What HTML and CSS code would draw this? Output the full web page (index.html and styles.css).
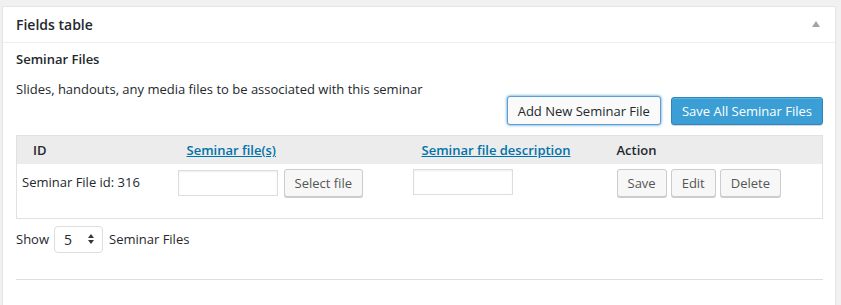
FILE: index.html
```html
<!DOCTYPE html>
<html lang="en">
<head>
    <meta charset="UTF-8">
    <meta name="viewport" content="width=device-width, initial-scale=1.0">
    <title>Fields table</title>
    <link rel="stylesheet" href="styles.css">
</head>
<body>
    <div class="postbox">
        <div class="postbox-header">
            <h2>Fields table</h2>
            <svg class="toggle" width="10" height="8" viewBox="0 0 10 8"><polygon points="5,1 9,7 1,7" fill="#a0a5aa"/></svg>
        </div>
        <div class="inside">
            <h3>Seminar Files</h3>
            <p class="description">Slides, handouts, any media files to be associated with this seminar</p>
            <div class="top-actions">
                <button class="button focused">Add New Seminar File</button>
                <button class="button button-primary">Save All Seminar Files</button>
            </div>

            <table class="fields">
                <colgroup>
                    <col class="col-id">
                    <col class="col-file">
                    <col class="col-desc">
                    <col class="col-action">
                </colgroup>
                <thead>
                    <tr>
                        <th class="th-id">ID</th>
                        <th><a href="#">Seminar file(s)</a></th>
                        <th><a href="#">Seminar file description</a></th>
                        <th class="th-action">Action</th>
                    </tr>
                </thead>
                <tbody>
                    <tr>
                        <td class="td-id">Seminar File id: 316</td>
                        <td>
                            <div class="cell-row">
                                <input type="text" class="field">
                                <button class="button">Select file</button>
                            </div>
                        </td>
                        <td>
                            <div class="cell-row">
                                <input type="text" class="field">
                            </div>
                        </td>
                        <td>
                            <div class="cell-row tight">
                                <button class="button">Save</button>
                                <button class="button">Edit</button>
                                <button class="button">Delete</button>
                            </div>
                        </td>
                    </tr>
                </tbody>
            </table>

            <div class="per-page">
                <span>Show</span>
                <div class="select-box">
                    <span>5</span>
                    <svg width="8" height="12" viewBox="0 0 8 12"><polygon points="4,1 7,5 1,5" fill="#32373c"/><polygon points="4,11 7,7 1,7" fill="#32373c"/></svg>
                </div>
                <span>Seminar Files</span>
            </div>

            <hr class="divider">
        </div>
    </div>
</body>
</html>
```

FILE: styles.css
```css
body {
    margin: 0;
    background-color: #f1f1f1;
    font-family: "Open Sans", Arial, sans-serif;
    font-size: 13px;
    color: #23282d;
}
.postbox {
    margin: 6px 5px 0 2px;
    height: 320px;
    background-color: #fff;
    border: 1px solid #e5e5e5;
    box-shadow: 0 1px 1px rgba(0, 0, 0, 0.04);
}
.postbox-header {
    display: flex;
    align-items: center;
    justify-content: space-between;
    height: 35px;
    padding: 0 14px 0 13px;
    border-bottom: 1px solid #eee;
}
.postbox-header h2 {
    margin: 0;
    font-size: 14px;
    font-weight: 600;
    line-height: 1;
}
.toggle {
    margin-top: -1px;
}
.inside {
    padding: 0 12px 0 13px;
}
.inside h3 {
    margin: 7px 0 0;
    font-size: 13px;
    font-weight: 600;
    line-height: 18px;
}
.description {
    margin: 14px 0 0;
    line-height: 14px;
}
.top-actions {
    display: flex;
    justify-content: flex-end;
    align-items: center;
    gap: 10px;
}
.button {
    height: 28px;
    padding: 0 10px;
    font-family: inherit;
    font-size: 13px;
    line-height: 26px;
    color: #555;
    background-color: #f7f7f7;
    border: 1px solid #ccc;
    border-radius: 3px;
    box-shadow: 0 1px 0 #ccc;
    cursor: pointer;
}
.button.focused {
    height: 29px;
    color: #23282d;
    background-color: #fafafa;
    border-color: #5b9dd9;
    box-shadow: 0 0 3px rgba(0, 115, 170, 0.8);
}
.button-primary {
    color: #fff;
    background-color: #3b9fd5;
    border-color: #2a86bd;
    box-shadow: inset 0 1px 0 rgba(120, 200, 230, 0.5), 0 1px 0 rgba(0, 0, 0, 0.15);
}
.fields {
    width: 100%;
    margin-top: 10px;
    border-collapse: collapse;
    border: 1px solid #e1e1e1;
    table-layout: fixed;
}
.col-id { width: 155px; }
.col-file { width: 235px; }
.col-desc { width: 204px; }
.fields th {
    height: 28px;
    padding: 0 0 0 15px;
    text-align: left;
    font-weight: 600;
    background-color: #ececec;
}
.fields th.th-id {
    padding-left: 16px;
}
.fields th.th-action {
    padding-left: 6px;
}
.fields th a {
    color: #0073aa;
    text-decoration: underline;
}
.fields td {
    height: 54px;
    padding: 5px 0 0 6px;
    vertical-align: top;
    box-sizing: border-box;
}
.fields td.td-id {
    padding: 9px 0 0 5px;
    line-height: 18px;
}
.cell-row {
    display: flex;
    align-items: center;
    gap: 6px;
}
.cell-row.tight {
    gap: 4px;
}
.field {
    width: 100px;
    height: 26px;
    box-sizing: border-box;
    margin: 0;
    border: 1px solid #ddd;
    box-shadow: inset 0 1px 2px rgba(0, 0, 0, 0.07);
}
.per-page {
    display: flex;
    align-items: center;
    gap: 5px;
    margin-top: 7px;
}
.select-box {
    display: flex;
    align-items: center;
    justify-content: space-between;
    width: 49px;
    height: 27px;
    box-sizing: border-box;
    padding: 0 7px 0 9px;
    border: 1px solid #ddd;
    border-radius: 4px;
    font-size: 14px;
    margin-right: 1px;
}
.divider {
    margin: 26px 0 0;
    border: 0;
    border-top: 1px solid #ddd;
}
```
